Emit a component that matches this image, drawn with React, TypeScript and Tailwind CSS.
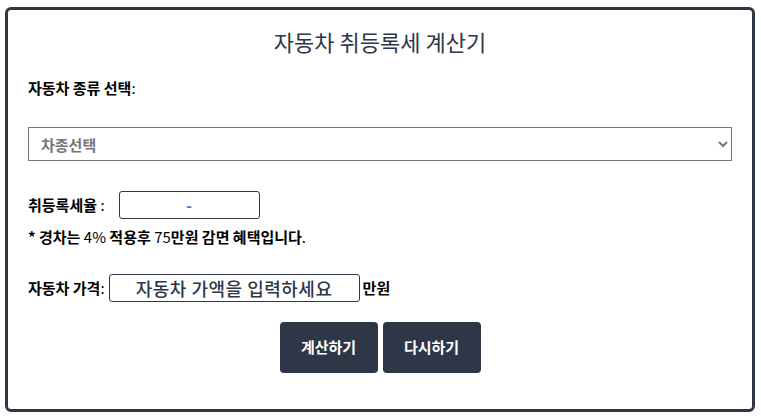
export default function App() {
  return (
    <div
      className="min-h-[418px] bg-white pl-[5px] pt-[7px]"
      style={{ fontFamily: '"Noto Sans CJK KR", "Noto Sans", sans-serif' }}
    >
      <div className="flex h-[405px] w-[750px] flex-col rounded-[6px] border-[3px] border-[#2d3748] px-[20px]">
        <h1 className="mt-[16px] text-center text-[22px] leading-[30px] font-normal text-[#2d3748]">
          자동차 취등록세 계산기
        </h1>

        <div className="mt-[22px] text-[15px] leading-[20px] font-bold text-black">
          자동차 종류 선택<span className="font-normal">:</span>
        </div>

        <select className="mt-[29px] h-[34px] w-full border border-[#767676] bg-white px-[8px] text-[15px] font-bold text-[#767676]">
          <option>차종선택</option>
          <option>경차</option>
          <option>승용차</option>
          <option>승합차</option>
        </select>

        <div className="mt-[30px] flex items-center text-[15px] font-bold text-black">
          <span>
            취등록세율 <span className="font-normal">:</span>
          </span>
          <input
            readOnly
            value="-"
            className="ml-[14px] h-[28px] w-[141px] rounded-[3px] border border-[#2d3748] text-center text-[16px] font-bold text-[#3182ce]"
          />
        </div>

        <p className="mt-[8px] text-[15px] leading-[20px] font-bold text-black">
          * 경차는 <span className="font-normal">4%</span> 적용후{" "}
          <span className="font-normal">75</span>만원 감면 혜택입니다
          <span className="font-normal">.</span>
        </p>

        <div className="mt-[27px] flex items-center text-[15px] font-bold text-black">
          <span>
            자동차 가격<span className="font-normal">:</span>
          </span>
          <input
            placeholder="자동차 가액을 입력하세요"
            className="ml-[4px] h-[28px] w-[251px] rounded-[3px] border border-[#2d3748] text-center text-[18px] font-medium tracking-[0.5px] text-[#2d3748] placeholder:text-[#2d3748]"
          />
          <span className="ml-[3px]">만원</span>
        </div>

        <div className="mt-[20px] flex justify-center gap-[5px]">
          <button className="h-[51px] w-[98px] rounded-[4px] bg-[#2d3748] text-[15px] font-bold text-white">
            계산하기
          </button>
          <button className="h-[51px] w-[98px] rounded-[4px] bg-[#2d3748] text-[15px] font-bold text-white">
            다시하기
          </button>
        </div>
      </div>
    </div>
  );
}
